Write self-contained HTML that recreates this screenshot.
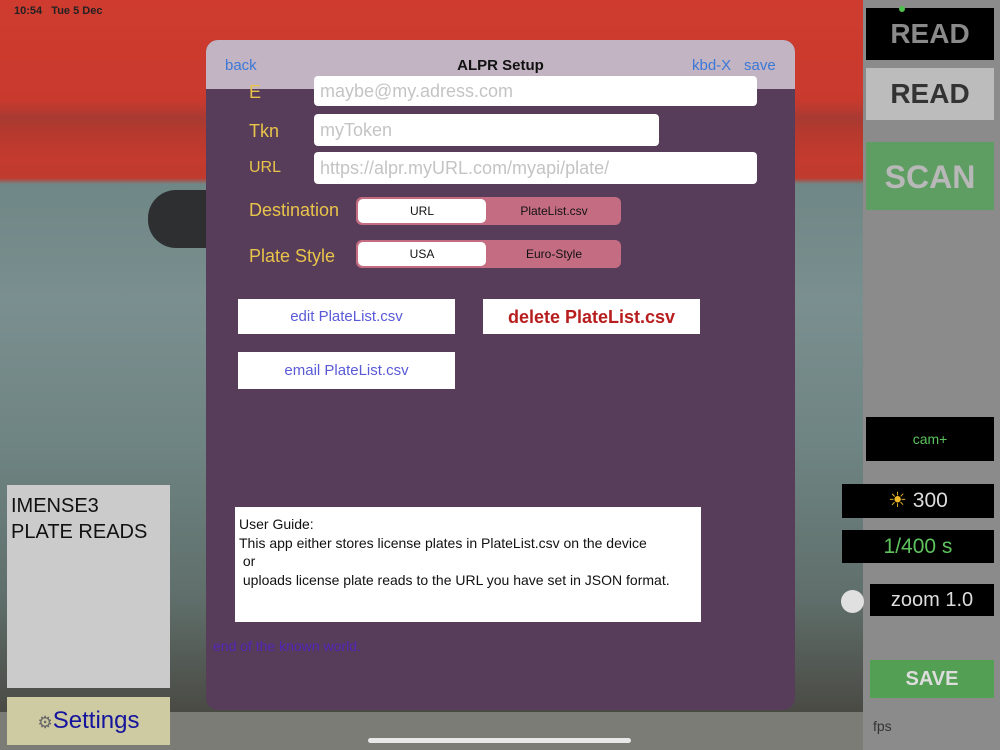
<!DOCTYPE html>
<html><head><meta charset="utf-8"><style>
*{margin:0;padding:0;box-sizing:border-box}
body{width:1000px;height:750px;overflow:hidden;position:relative;font-family:"Liberation Sans",sans-serif;background:#7b7c76}
.a{position:absolute}
.cam{left:0;top:0;width:863px;height:712px;background:linear-gradient(180deg,#cf3b2f 0px,#c93a2e 100px,#a83a32 118px,#b8392e 135px,#c43a2e 160px,#c03a2e 178px,#6f8786 184px,#7a8f8f 300px,#6e8482 450px,#5f6e6a 600px,#4a4a44 712px)}
.right{left:863px;top:0;width:137px;height:750px;background:#8b8b8b}
.modal{left:206px;top:40px;width:589px;height:670px;border-radius:12px;background:#583d5a;overflow:hidden}
.hdr{left:0;top:0;width:589px;height:49px;background:#c2b4c2}
.nav{top:17px;font-size:15px;color:#3b78d8}
.lbl{color:#e8c44a}
.inp{background:#fff;border-radius:4px;color:#c4c4c4;font-size:18px;padding-left:6px;line-height:32px;height:32px}
.seg{border-radius:6px;background:#c46c82;height:28px;width:265px;font-size:12px;color:#111}
.seg .on{position:absolute;left:2px;top:2px;width:128px;height:24px;background:#fff;border-radius:5px;text-align:center;line-height:24px}
.seg .off{position:absolute;left:131px;top:0;width:134px;height:28px;text-align:center;line-height:28px}
.btn{background:#fff;text-align:center;font-size:15px;color:#5a5ad8}
</style></head><body>
<div class="a cam"></div>
<div class="a" style="left:148px;top:190px;width:70px;height:58px;background:#2e2f30;border-radius:28px 0 0 28px"></div>
<div class="a" style="left:14px;top:5px;font-size:11px;color:#222;font-weight:bold">10:54&nbsp;&nbsp;&nbsp;Tue 5 Dec</div>
<div class="a right"></div>
<div class="a" style="left:866px;top:8px;width:128px;height:52px;background:#000;color:#8a8a8a;font-size:28px;font-weight:bold;text-align:center;line-height:52px">READ</div>
<div class="a" style="left:899px;top:6px;width:6px;height:6px;border-radius:3px;background:#4ec04e"></div>
<div class="a" style="left:866px;top:68px;width:128px;height:52px;background:#bcbcbc;color:#333;font-size:28px;font-weight:bold;text-align:center;line-height:52px">READ</div>
<div class="a" style="left:866px;top:142px;width:128px;height:68px;background:#5e9e62;color:#b8b8b8;font-size:32px;font-weight:bold;text-align:center;line-height:70px">SCAN</div>
<div class="a" style="left:866px;top:417px;width:128px;height:44px;background:#000;color:#5dc25d;font-size:14px;text-align:center;line-height:44px">cam+</div>
<div class="a" style="left:842px;top:484px;width:152px;height:34px;background:#000;color:#ddd;font-size:21px;text-align:center;line-height:34px"><span style="color:#f0b828">☀</span> 300</div>
<div class="a" style="left:842px;top:530px;width:152px;height:33px;background:#000;color:#5dc25d;font-size:21px;text-align:center;line-height:33px">1/400 s</div>
<div class="a" style="left:841px;top:590px;width:23px;height:23px;border-radius:12px;background:#e0e0e0"></div>
<div class="a" style="left:870px;top:584px;width:124px;height:32px;background:#000;color:#ddd;font-size:20px;text-align:center;line-height:32px">zoom 1.0</div>
<div class="a" style="left:870px;top:660px;width:124px;height:38px;background:#53a055;color:#ddd;font-size:20px;font-weight:bold;text-align:center;line-height:38px">SAVE</div>
<div class="a" style="left:873px;top:718px;font-size:14px;color:#333">fps</div>
<div class="a" style="left:7px;top:485px;width:163px;height:203px;background:#cbcbcb;font-size:20px;color:#111;padding:8px 4px;line-height:26px">IMENSE3<br>PLATE READS</div>
<div class="a" style="left:7px;top:697px;width:163px;height:48px;background:#cecaa2;font-size:24px;color:#14149c;text-align:center;line-height:48px"><span style="font-size:17px;color:#666">⚙</span>Settings</div>
<div class="a" style="left:368px;top:738px;width:263px;height:5px;border-radius:3px;background:#e8e8e8"></div>
<div class="a modal">
 <div class="a hdr"></div>
 <div class="a nav" style="left:19px">back</div>
 <div class="a" style="left:0;width:589px;top:17px;text-align:center;font-size:15px;color:#111;font-weight:bold">ALPR Setup</div>
 <div class="a nav" style="left:486px">kbd-X</div>
 <div class="a nav" style="left:538px">save</div>
 <div class="a lbl" style="left:43px;top:42px;font-size:18px">E</div>
 <div class="a inp" style="left:108px;top:36px;width:443px;height:30px;line-height:30px">maybe@my.adress.com</div>
 <div class="a lbl" style="left:43px;top:81px;font-size:18px">Tkn</div>
 <div class="a inp" style="left:108px;top:74px;width:345px">myToken</div>
 <div class="a lbl" style="left:43px;top:119px;font-size:16px">URL</div>
 <div class="a inp" style="left:108px;top:112px;width:443px">https://alpr.myURL.com/myapi/plate/</div>
 <div class="a lbl" style="left:43px;top:160px;font-size:18px">Destination</div>
 <div class="a seg" style="left:150px;top:157px"><div class="on">URL</div><div class="off">PlateList.csv</div></div>
 <div class="a lbl" style="left:43px;top:206px;font-size:18px">Plate Style</div>
 <div class="a seg" style="left:150px;top:200px"><div class="on">USA</div><div class="off">Euro-Style</div></div>
 <div class="a btn" style="left:32px;top:259px;width:217px;height:35px;line-height:35px">edit PlateList.csv</div>
 <div class="a btn" style="left:277px;top:259px;width:217px;height:35px;line-height:36px;color:#b81e1e;font-weight:bold;font-size:18px">delete PlateList.csv</div>
 <div class="a btn" style="left:32px;top:312px;width:217px;height:37px;line-height:37px">email PlateList.csv</div>
 <div class="a" style="left:29px;top:467px;width:466px;height:115px;background:#fff;font-size:14px;color:#111;padding:8px 4px;line-height:18.5px">User Guide:<br>This app either stores license plates in PlateList.csv on the device<br>&nbsp;or<br>&nbsp;uploads license plate reads to the URL you have set in JSON format.</div>
 <div class="a" style="left:7px;top:598px;font-size:14px;color:#5424b4">end of the known world.</div>
</div>
</body></html>
